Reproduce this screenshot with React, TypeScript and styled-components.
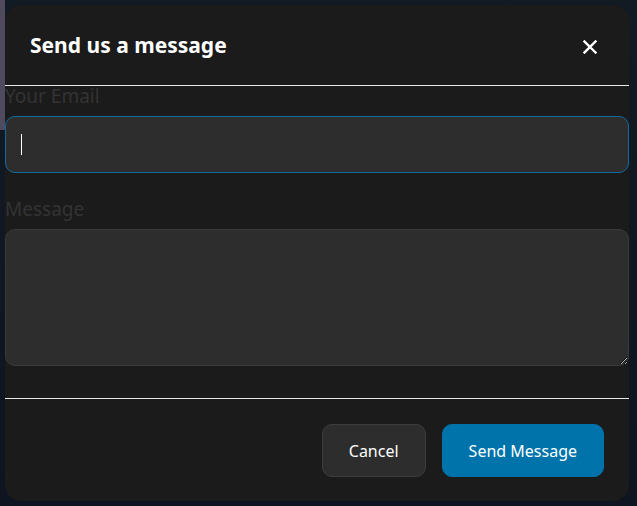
import React from "react";
import styled, { createGlobalStyle } from "styled-components";

const GlobalStyle = createGlobalStyle`
  html, body {
    margin: 0;
    padding: 0;
    background: #0f1721;
  }
  body {
    font-family: "Noto Sans", "Open Sans", sans-serif;
  }
`;

const Backdrop = styled.div`
  width: 637px;
  height: 506px;
  box-sizing: border-box;
  padding: 5px 8px 5px 5px;
  background:
    linear-gradient(90deg, #4f4a5e 0px, #4f4a5e 5px, transparent 5px) 0 0 / 100% 130px no-repeat,
    linear-gradient(180deg, #121a24 0%, #0e1520 100%);
`;

const Modal = styled.div`
  width: 624px;
  height: 496px;
  background: #1b1b1b;
  border-radius: 16px;
  display: flex;
  flex-direction: column;
  overflow: hidden;
`;

const Header = styled.div`
  height: 80px;
  display: flex;
  align-items: center;
  justify-content: space-between;
  padding: 0 29px 0 25px;
  border-bottom: 1px solid #e8e8e8;
`;

const Title = styled.h2`
  margin: 0;
  color: #ffffff;
  font-size: 21px;
  font-weight: 700;
`;

const CloseButton = styled.button`
  border: none;
  background: none;
  padding: 0;
  margin-top: 4px;
  width: 20px;
  height: 20px;
  display: flex;
  align-items: center;
  justify-content: center;
  cursor: pointer;
`;

const Body = styled.div`
  display: flex;
  flex-direction: column;
  padding-bottom: 32px;
  border-bottom: 1px solid #e8e8e8;
`;

const Field = styled.label<{ $gap: number }>`
  display: flex;
  flex-direction: column;
  gap: 9px;
  margin-top: ${(p) => p.$gap}px;
`;

const LabelText = styled.span`
  color: #333333;
  font-size: 19px;
  line-height: 21px;
`;

const InputWrap = styled.div`
  position: relative;
`;

const Caret = styled.span`
  position: absolute;
  left: 16px;
  top: 18px;
  width: 1px;
  height: 21px;
  background: #ffffff;
  pointer-events: none;
`;

const TextInput = styled.input`
  box-sizing: border-box;
  display: block;
  height: 57px;
  width: 100%;
  background: #2d2d2d;
  border: 1px solid #0e6c9c;
  border-radius: 10px;
  padding: 0 15px;
  color: #fff;
  caret-color: transparent;
  font: inherit;
  font-size: 17px;
  outline: none;
`;

const TextArea = styled.textarea`
  box-sizing: border-box;
  height: 137px;
  width: 100%;
  background: #2d2d2d;
  border: 1px solid #3a3a3a;
  border-radius: 10px;
  padding: 12px 15px;
  color: #fff;
  font: inherit;
  font-size: 17px;
  outline: none;
  resize: vertical;
  display: block;
`;

const Footer = styled.div`
  display: flex;
  justify-content: flex-end;
  gap: 16px;
  padding: 25px 25px 0 0;
`;

const Button = styled.button<{ $primary?: boolean }>`
  height: 53px;
  padding: 0 26px;
  border-radius: 10px;
  border: 1px solid ${(p) => (p.$primary ? "#0073aa" : "#3d3d3d")};
  background: ${(p) => (p.$primary ? "#0073aa" : "#2d2d2d")};
  color: #ffffff;
  font-family: inherit;
  font-size: 16px;
  cursor: pointer;
`;

const App: React.FC = () => {
  return (
    <>
      <GlobalStyle />
      <Backdrop>
        <Modal>
          <Header>
            <Title>Send us a message</Title>
            <CloseButton aria-label="Close">
              <svg width="14" height="14" viewBox="0 0 14 14">
                <path d="M1.5 1.5 L12.5 12.5 M12.5 1.5 L1.5 12.5" stroke="#fff" strokeWidth="2.4" strokeLinecap="square" />
              </svg>
            </CloseButton>
          </Header>
          <Body>
            <Field $gap={0}>
              <LabelText>Your Email</LabelText>
              <InputWrap>
                <TextInput type="email" />
                <Caret />
              </InputWrap>
            </Field>
            <Field $gap={26}>
              <LabelText>Message</LabelText>
              <TextArea />
            </Field>
          </Body>
          <Footer>
            <Button>Cancel</Button>
            <Button $primary>Send Message</Button>
          </Footer>
        </Modal>
      </Backdrop>
    </>
  );
};

export default App;
